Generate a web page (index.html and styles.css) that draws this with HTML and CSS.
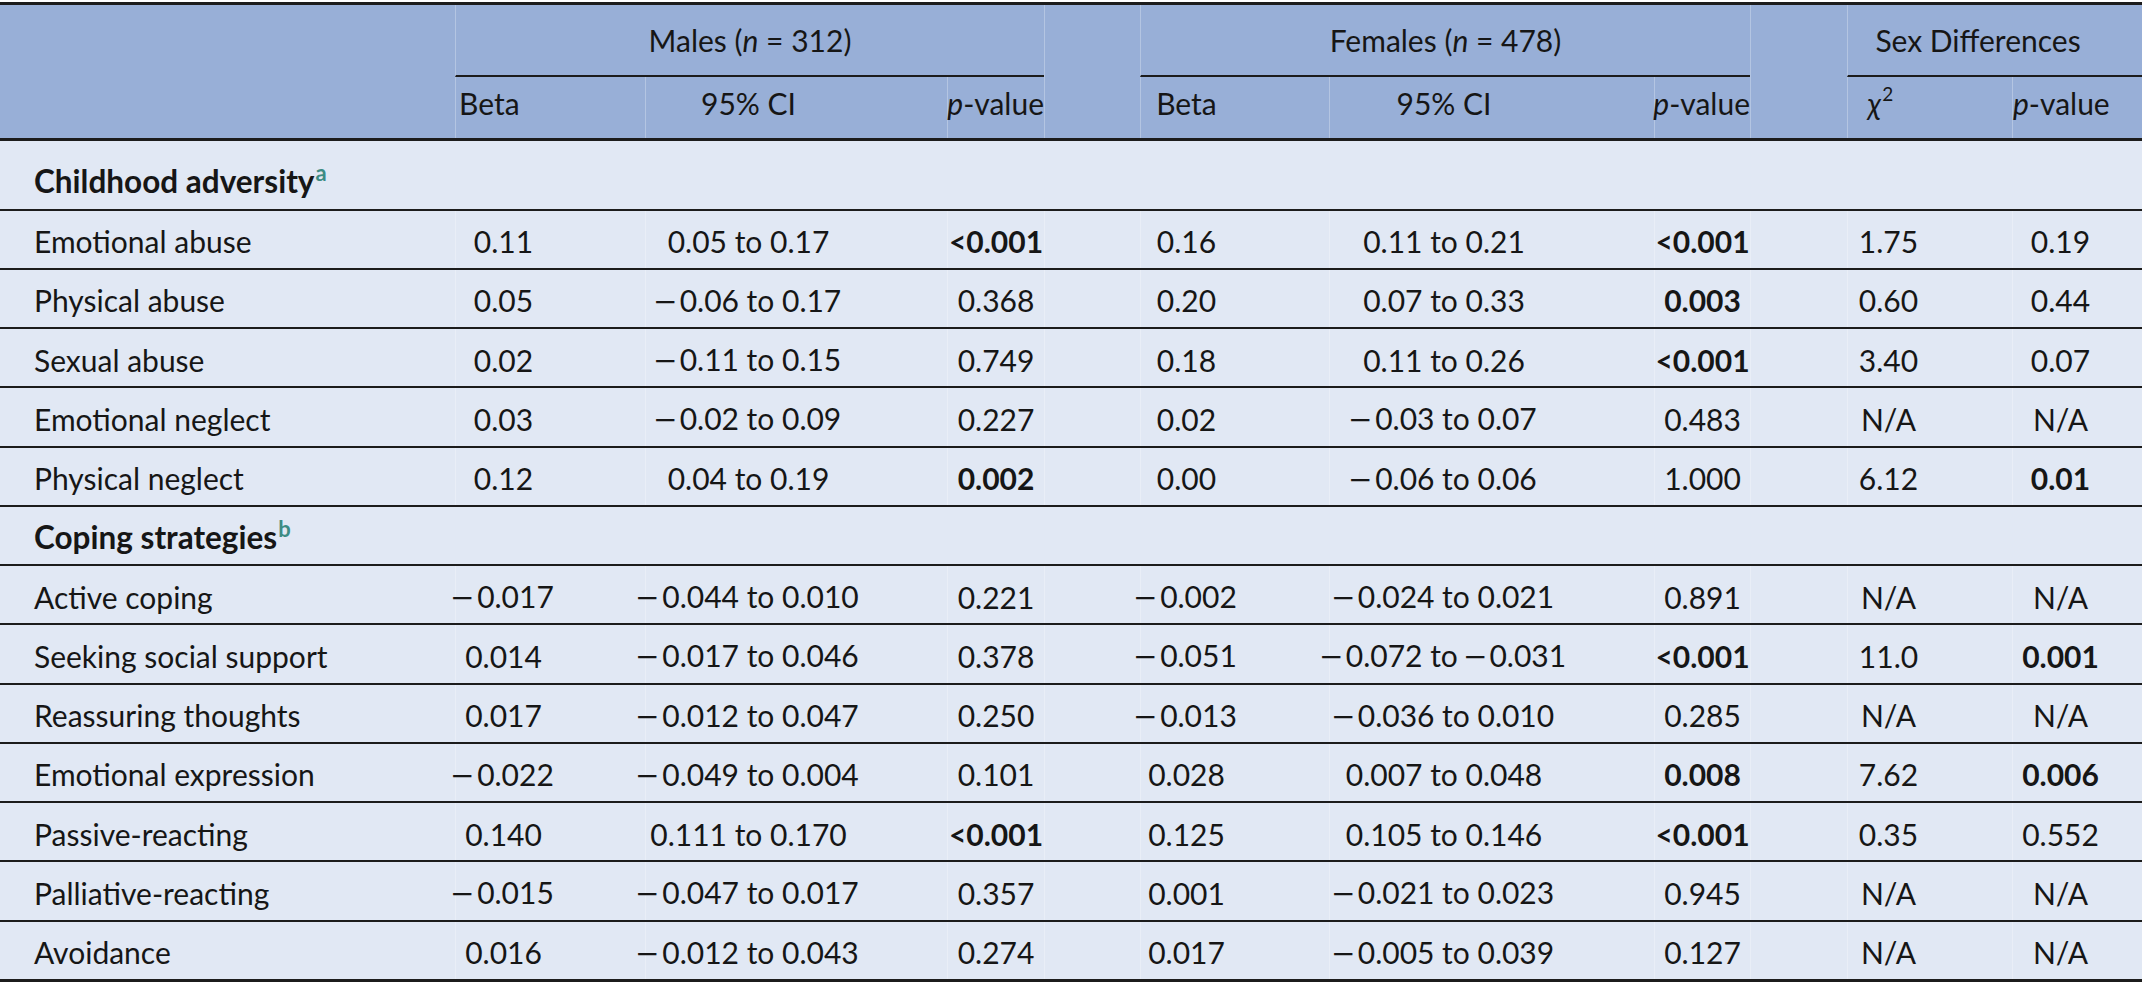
FILE: index.html
```html
<!DOCTYPE html>
<html lang="en">
<head>
<meta charset="utf-8">
<title>Table</title>
<link rel="stylesheet" href="styles.css">
</head>
<body>
<div class="tbl">
  <div class="row head1">
    <div class="c"></div>
    <div class="c grp"><span>Males (<i>n</i> = 312)</span></div>
    <div class="c"></div>
    <div class="c grp"><span>Females (<i>n</i> = 478)</span></div>
    <div class="c"></div>
    <div class="c grp grp-s"><span>Sex Differences</span></div>
  </div>
  <div class="row head2">
    <div class="c"></div>
    <div class="c h-mb">Beta</div>
    <div class="c mci">95% CI</div>
    <div class="c h-p"><span><i>p</i>-value</span></div>
    <div class="c"></div>
    <div class="c fb">Beta</div>
    <div class="c fci">95% CI</div>
    <div class="c h-p"><span><i>p</i>-value</span></div>
    <div class="c"></div>
    <div class="c h-x"><span><i class="chi">χ</i><sup>2</sup></span></div>
    <div class="c h-sp"><span><i>p</i>-value</span></div>
  </div>

  <div class="row sec sec-first">
    <div class="c lab"><span><b>Childhood adversity</b><sup class="fn">a</sup></span></div>
  </div>
  <div class="row data">
    <div class="c lab">Emotional abuse</div>
    <div class="c mb">0.11</div><div class="c mci">0.05 to 0.17</div><div class="c mp"><b>&lt;0.001</b></div><div class="c"></div>
    <div class="c fb">0.16</div><div class="c fci">0.11 to 0.21</div><div class="c fp"><b>&lt;0.001</b></div><div class="c"></div>
    <div class="c sx">1.75</div><div class="c spv">0.19</div>
  </div>
  <div class="row data">
    <div class="c lab">Physical abuse</div>
    <div class="c mb">0.05</div><div class="c mci"><span><span class="m">−</span>0.06 to 0.17</span></div><div class="c mp">0.368</div><div class="c"></div>
    <div class="c fb">0.20</div><div class="c fci">0.07 to 0.33</div><div class="c fp"><b>0.003</b></div><div class="c"></div>
    <div class="c sx">0.60</div><div class="c spv">0.44</div>
  </div>
  <div class="row data">
    <div class="c lab">Sexual abuse</div>
    <div class="c mb">0.02</div><div class="c mci"><span><span class="m">−</span>0.11 to 0.15</span></div><div class="c mp">0.749</div><div class="c"></div>
    <div class="c fb">0.18</div><div class="c fci">0.11 to 0.26</div><div class="c fp"><b>&lt;0.001</b></div><div class="c"></div>
    <div class="c sx">3.40</div><div class="c spv">0.07</div>
  </div>
  <div class="row data">
    <div class="c lab">Emotional neglect</div>
    <div class="c mb">0.03</div><div class="c mci"><span><span class="m">−</span>0.02 to 0.09</span></div><div class="c mp">0.227</div><div class="c"></div>
    <div class="c fb">0.02</div><div class="c fci"><span><span class="m">−</span>0.03 to 0.07</span></div><div class="c fp">0.483</div><div class="c"></div>
    <div class="c sx">N/A</div><div class="c spv">N/A</div>
  </div>
  <div class="row data">
    <div class="c lab">Physical neglect</div>
    <div class="c mb">0.12</div><div class="c mci">0.04 to 0.19</div><div class="c mp"><b>0.002</b></div><div class="c"></div>
    <div class="c fb">0.00</div><div class="c fci"><span><span class="m">−</span>0.06 to 0.06</span></div><div class="c fp">1.000</div><div class="c"></div>
    <div class="c sx">6.12</div><div class="c spv"><b>0.01</b></div>
  </div>

  <div class="row sec">
    <div class="c lab"><span><b>Coping strategies</b><sup class="fn">b</sup></span></div>
  </div>
  <div class="row data">
    <div class="c lab">Active coping</div>
    <div class="c mb"><span><span class="m">−</span>0.017</span></div><div class="c mci"><span><span class="m">−</span>0.044 to 0.010</span></div><div class="c mp">0.221</div><div class="c"></div>
    <div class="c fb"><span><span class="m">−</span>0.002</span></div><div class="c fci"><span><span class="m">−</span>0.024 to 0.021</span></div><div class="c fp">0.891</div><div class="c"></div>
    <div class="c sx">N/A</div><div class="c spv">N/A</div>
  </div>
  <div class="row data">
    <div class="c lab">Seeking social support</div>
    <div class="c mb">0.014</div><div class="c mci"><span><span class="m">−</span>0.017 to 0.046</span></div><div class="c mp">0.378</div><div class="c"></div>
    <div class="c fb"><span><span class="m">−</span>0.051</span></div><div class="c fci"><span><span class="m">−</span>0.072 to <span class="m">−</span>0.031</span></div><div class="c fp"><b>&lt;0.001</b></div><div class="c"></div>
    <div class="c sx">11.0</div><div class="c spv"><b>0.001</b></div>
  </div>
  <div class="row data">
    <div class="c lab">Reassuring thoughts</div>
    <div class="c mb">0.017</div><div class="c mci"><span><span class="m">−</span>0.012 to 0.047</span></div><div class="c mp">0.250</div><div class="c"></div>
    <div class="c fb"><span><span class="m">−</span>0.013</span></div><div class="c fci"><span><span class="m">−</span>0.036 to 0.010</span></div><div class="c fp">0.285</div><div class="c"></div>
    <div class="c sx">N/A</div><div class="c spv">N/A</div>
  </div>
  <div class="row data">
    <div class="c lab">Emotional expression</div>
    <div class="c mb"><span><span class="m">−</span>0.022</span></div><div class="c mci"><span><span class="m">−</span>0.049 to 0.004</span></div><div class="c mp">0.101</div><div class="c"></div>
    <div class="c fb">0.028</div><div class="c fci">0.007 to 0.048</div><div class="c fp"><b>0.008</b></div><div class="c"></div>
    <div class="c sx">7.62</div><div class="c spv"><b>0.006</b></div>
  </div>
  <div class="row data">
    <div class="c lab">Passive-reacting</div>
    <div class="c mb">0.140</div><div class="c mci">0.111 to 0.170</div><div class="c mp"><b>&lt;0.001</b></div><div class="c"></div>
    <div class="c fb">0.125</div><div class="c fci">0.105 to 0.146</div><div class="c fp"><b>&lt;0.001</b></div><div class="c"></div>
    <div class="c sx">0.35</div><div class="c spv">0.552</div>
  </div>
  <div class="row data">
    <div class="c lab">Palliative-reacting</div>
    <div class="c mb"><span><span class="m">−</span>0.015</span></div><div class="c mci"><span><span class="m">−</span>0.047 to 0.017</span></div><div class="c mp">0.357</div><div class="c"></div>
    <div class="c fb">0.001</div><div class="c fci"><span><span class="m">−</span>0.021 to 0.023</span></div><div class="c fp">0.945</div><div class="c"></div>
    <div class="c sx">N/A</div><div class="c spv">N/A</div>
  </div>
  <div class="row data last">
    <div class="c lab">Avoidance</div>
    <div class="c mb">0.016</div><div class="c mci"><span><span class="m">−</span>0.012 to 0.043</span></div><div class="c mp">0.274</div><div class="c"></div>
    <div class="c fb">0.017</div><div class="c fci"><span><span class="m">−</span>0.005 to 0.039</span></div><div class="c fp">0.127</div><div class="c"></div>
    <div class="c sx">N/A</div><div class="c spv">N/A</div>
  </div>
</div>
</body>
</html>
```

FILE: styles.css
```css
html, body {
  margin: 0;
  padding: 0;
  background: #ffffff;
}

body {
  font-family: "Lato", "Open Sans", "DejaVu Sans", sans-serif;
  font-size: 30px;
  color: #161616;
  overflow: hidden;
}

.tbl {
  margin-top: 2px;
  width: 2142px;
  border-top: 3px solid #1c1c1c;
  background: #e1e8f4;
}

.row {
  display: grid;
  grid-template-columns: 455px 190px 302px 97px 96px 189px 325px 96px 97px 165px 130px;
  box-sizing: border-box;
}

.c {
  display: flex;
  align-items: center;
  justify-content: center;
  white-space: nowrap;
  box-sizing: border-box;
  border-left: 1px solid rgba(255, 255, 255, 0.28);
  min-width: 0;
}

.c:first-child {
  border-left: none;
}

/* minus sign: wide, as in the source typeface */
.m {
  display: inline-block;
  font-family: "Liberation Sans", "DejaVu Sans", sans-serif;
  font-size: 29px;
  transform: scaleX(1.3);
  margin-left: 1px;
  margin-right: 6px;
}

/* ---------- header ---------- */
.head1, .head2 {
  background: #98afd7;
}

.head1 {
  height: 72px;
  grid-template-columns: 455px 589px 96px 610px 97px 295px;
}

.head1 .grp {
  border-bottom: 2px solid #1c1c1c;
}

.head1 .grp-s {
  padding-right: 34px;
}

.head2 {
  height: 64px;
  border-bottom: 3px solid #1c1c1c;
}

.head2 .c {
  padding-bottom: 9px;
}

.head2 .h-mb {
  justify-content: flex-start;
  padding-left: 3px;
}

.head2 .h-p {
  justify-content: flex-end;
}

.head2 .h-x {
  padding-right: 99px;
}

.head2 .h-sp {
  justify-content: flex-start;
}

.chi {
  font-style: italic;
}

.head2 sup {
  font-size: 19px;
  vertical-align: 14px;
  line-height: 0;
  margin-left: 1px;
}

/* ---------- sections ---------- */
.sec {
  grid-template-columns: 1fr;
  height: 59.25px;
  border-bottom: 2px solid #1c1c1c;
}

.sec b {
  font-size: 31.5px;
}

.sec-first {
  height: 69.5px;
}

.sec .c {
  padding-top: 3px;
}

.sec-first .c {
  padding-top: 13px;
}

.fn {
  color: #3d8c84;
  font-weight: 700;
  font-size: 22px;
  vertical-align: 12px;
  line-height: 0;
  margin-left: 1px;
}

/* ---------- data ---------- */
.data {
  height: 59.25px;
  border-bottom: 2px solid #1c1c1c;
}

.data .c {
  padding-top: 4px;
}

.data.last {
  height: 60.25px;
  border-bottom: 3px solid #1c1c1c;
}

.lab {
  justify-content: flex-start;
  padding-left: 34px;
}

b {
  font-weight: 700;
}

.mb { padding-right: 94px; }
.mci { padding-right: 96px; }
.fb { padding-right: 97px; }
.fci { padding-right: 96px; }
.sx { padding-right: 83px; }
.spv { padding-right: 34px; }
```
